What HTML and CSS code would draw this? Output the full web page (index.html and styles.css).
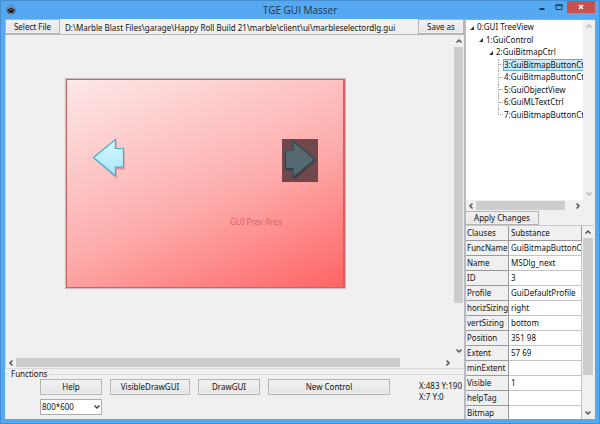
FILE: index.html
```html
<!DOCTYPE html>
<html lang="en">
<head>
<meta charset="utf-8">
<title>TGE GUI Masser</title>
<link rel="stylesheet" href="styles.css">
</head>
<body>
<svg width="0" height="0" class="defs" aria-hidden="true">
  <symbol id="chev" viewBox="0 0 8 8"><path d="M1.5 5.5 4 3l2.5 2.5" fill="none" stroke="currentColor" stroke-width="1.5"/></symbol>
  <symbol id="tri" viewBox="0 0 5 5"><path d="M5 0v5H0z" fill="#333"/></symbol>
</svg>
<div class="window">
  <header class="titlebar">
    <svg class="logo" viewBox="0 0 10 10" aria-hidden="true">
      <circle cx="5" cy="5" r="4.7" fill="#536b89"/>
      <path d="M1 4a4.2 4.2 0 0 1 8 0" fill="#8ea5be"/>
      <ellipse cx="5" cy="6.6" rx="2.1" ry="1.7" fill="#08111f"/>
      <circle cx="2.5" cy="4.8" r=".9" fill="#08111f"/><circle cx="4" cy="3.3" r=".9" fill="#08111f"/>
      <circle cx="6" cy="3.3" r=".9" fill="#08111f"/><circle cx="7.5" cy="4.8" r=".9" fill="#08111f"/>
      <circle cx="5" cy="8.5" r=".7" fill="#c5d4e2"/>
    </svg>
    <h1>TGE GUI Masser</h1>
    <div class="controls">
      <button class="ctl" aria-label="Minimize"><svg viewBox="0 0 8 8"><path d="M1.500 5h5v2h-5z" fill="#1d3c5b"/></svg></button>
      <button class="ctl" aria-label="Maximize"><svg viewBox="0 0 8 8"><path d="M1 2h6v4.500H1z" fill="none" stroke="#1d3c5b"/><path d="M.5 1.500h7v1.500h-7z" fill="#1d3c5b"/></svg></button>
      <button class="ctl close" aria-label="Close"><svg viewBox="0 0 8 8"><path d="m2 2 4 4M6 2 2 6" stroke="#fff" stroke-width="1.400"/></svg></button>
    </div>
  </header>
  <div class="client">
    <main class="left">
      <div class="toolbar">
        <button class="btn">Select File</button>
        <span class="path">D:\Marble Blast Files\garage\Happy Roll Build 21\marble\client\ui\marbleselectordlg.gui</span>
        <button class="btn save">Save as</button>
      </div>
      <div class="viewer">
        <div class="canvas">
          <div class="preview">
            <svg class="arrow prev" viewBox="0 0 36 42" aria-hidden="true">
              <defs><linearGradient id="ice" x2="0" y2="1"><stop stop-color="#d8f6ff"/><stop offset="1" stop-color="#a5e7fa"/></linearGradient></defs>
              <path d="M2.500 21 24.500 3.500v9h8v19h-8v9z" fill="#7a3f48" opacity=".35"/>
              <path d="M1.500 19.500 23.500 1.500v9h8v18.500h-8v9z" fill="url(#ice)" stroke="#4babc4" stroke-width="1.200"/>
            </svg>
            <span class="area-label">GUI Prev Area</span>
            <div class="selected">
              <svg viewBox="0 0 36 43" aria-hidden="true">
                <path d="M4 12h8V3l22 18.500L12 41v-9.500H4z" fill="#3d2c33" opacity=".6"/>
                <path d="M3.500 11h7.500V2l22 18.500L11 38.500v-9H3.500z" fill="#566870" stroke="#244d5a" stroke-width="1.200"/>
              </svg>
            </div>
          </div>
        </div>
        <div class="vbar"><svg><use href="#chev"/></svg><div class="track"><div class="thumb canvas-thumb"></div></div><svg class="down"><use href="#chev"/></svg></div>
        <div class="hbar"><svg class="west"><use href="#chev"/></svg><div class="track"><div class="thumb canvas-hthumb"></div></div><svg class="east"><use href="#chev"/></svg></div>
      </div>
      <fieldset class="functions">
        <legend>Functions</legend>
        <div class="actions">
          <button class="btn">Help</button>
          <button class="btn">VisibleDrawGUI</button>
          <button class="btn">DrawGUI</button>
          <button class="btn">New Control</button>
          <div class="combo">
            <select aria-label="Resolution"><option>800*600</option></select>
            <svg class="down"><use href="#chev"/></svg>
          </div>
        </div>
        <div class="coords">X:483 Y:190<br>X:7 Y:0</div>
      </fieldset>
    </main>
    <aside class="right">
      <div class="treebox">
        <ul class="tree">
          <li><svg><use href="#tri"/></svg><span>0:GUI TreeView</span></li>
          <li class="l1"><svg><use href="#tri"/></svg><span>1:GuiControl</span></li>
          <li class="l2"><svg><use href="#tri"/></svg><span>2:GuiBitmapCtrl</span></li>
          <li class="leaf current"><span>3:GuiBitmapButtonCtr</span></li>
          <li class="leaf"><span>4:GuiBitmapButtonCtr</span></li>
          <li class="leaf"><span>5:GuiObjectView</span></li>
          <li class="leaf"><span>6:GuiMLTextCtrl</span></li>
          <li class="leaf last"><span>7:GuiBitmapButtonCtr</span></li>
        </ul>
        <div class="vbar disabled"><svg><use href="#chev"/></svg><div class="track"></div><svg class="down"><use href="#chev"/></svg></div>
        <div class="hbar"><svg class="west"><use href="#chev"/></svg><div class="track"><div class="thumb tree-thumb"></div></div><svg class="east"><use href="#chev"/></svg></div>
      </div>
      <div class="apply"><button class="btn">Apply Changes</button></div>
      <div class="props">
        <div class="sheet">
          <table>
            <thead><tr><th>Clauses</th><th>Substance</th></tr></thead>
            <tbody>
              <tr><th>FuncName</th><td>GuiBitmapButtonCt</td></tr>
              <tr><th>Name</th><td>MSDlg_next</td></tr>
              <tr><th>ID</th><td>3</td></tr>
              <tr><th>Profile</th><td>GuiDefaultProfile</td></tr>
              <tr><th>horizSizing</th><td>right</td></tr>
              <tr><th>vertSizing</th><td>bottom</td></tr>
              <tr><th>Position</th><td>351 98</td></tr>
              <tr><th>Extent</th><td>57 69</td></tr>
              <tr><th>minExtent</th><td></td></tr>
              <tr><th>Visible</th><td>1</td></tr>
              <tr><th>helpTag</th><td></td></tr>
              <tr><th>Bitmap</th><td class="browse"></td></tr>
            </tbody>
          </table>
        </div>
        <div class="vbar"><svg><use href="#chev"/></svg><div class="track"><div class="thumb props-thumb"></div></div><svg class="down"><use href="#chev"/></svg></div>
      </div>
    </aside>
  </div>
</div>
</body>
</html>
```
FILE: styles.css
```css
*, ::before { box-sizing: border-box; }
body {
  margin: 0;
  font: 8px/12px "Noto Sans", "Open Sans", sans-serif;
  color: #111;
}
button, select { font: inherit; color: inherit; margin: 0; padding: 0; border-radius: 0; }
.defs { position: absolute; }

.window {
  display: grid;
  grid-template-rows: 18px minmax(0, 1fr);
  height: 100vh;
  padding: 0 4px 4px;
  background: #55a9f3;
  border: 1px solid #438fd2;
}
.titlebar { display: grid; grid-template-columns: 80px 1fr 80px; align-items: center; }
.logo { width: 10px; height: 10px; margin-left: 1px; }
.titlebar h1 { margin: 0; font: 400 10px/12px "Open Sans", sans-serif; text-align: center; color: #1f3448; }
.controls { display: flex; justify-content: flex-end; align-self: start; }
.ctl { display: grid; place-items: center; width: 17px; height: 12px; border: 0; background: none; }
.ctl svg { width: 8px; height: 8px; }
.ctl.close { width: 28px; background: #c75050; }

.client {
  display: grid;
  grid-template-columns: minmax(0, 1fr) 130px;
  grid-template-rows: minmax(0, 1fr);
  min-height: 0;
  background: #f0f0f0;
}
.btn {
  border: 1px solid #b4b4b4;
  background: linear-gradient(#f2f2f2, #e4e4e4);
  box-shadow: inset 0 0 0 1px #f0f0f0;
  text-align: center;
}

.left {
  display: grid;
  grid-template: 16px minmax(0, 1fr) 50px / minmax(0, 1fr);
  min-height: 0;
  border-right: 1px solid #b8bac0;
}
.toolbar { display: flex; border-bottom: 1px solid #b8b8b8; }
.toolbar .btn { flex: none; width: 55px; }
.toolbar .save { width: 46px; }
.path { flex: 1; padding: 3px 0 0 5px; white-space: nowrap; overflow: hidden; }

.viewer {
  display: grid;
  grid-template: minmax(0, 1fr) 11px / minmax(0, 1fr) 11px;
  border-left: 1px solid #d4d4d4;
  border-bottom: 1px solid #d8d8d8;
  min-height: 0;
}
.viewer .hbar { grid-column: 1 / -1; }
.canvas { position: relative; overflow: hidden; }
.preview {
  position: absolute;
  left: 60px;
  top: 44px;
  width: 279px;
  height: 209px;
  border: 1px solid #c86466;
  border-right-width: 2px;
  box-shadow: 0 0 1px 1px #cfc0c0;
  background: linear-gradient(157deg, #fde8e8, #fdadad 55%, #ff6464);
}
.arrow { position: absolute; left: 25px; top: 58px; width: 36px; height: 42px; }
.selected { position: absolute; left: 215px; top: 59px; width: 36px; height: 43px; background: #70474a; }
.selected svg { display: block; width: 100%; height: 100%; }
.area-label { position: absolute; left: 163px; top: 136px; color: #d4656a; }

.vbar { display: flex; flex-direction: column; align-items: center; background: #f0f0f0; color: #555; min-height: 0; }
.hbar { display: flex; align-items: center; background: #f0f0f0; color: #555; }
.vbar svg, .hbar svg { flex: none; width: 8px; height: 8px; margin: 2px 1px; }
.track { flex: 1; align-self: stretch; min-height: 0; padding: 0 1px; }
.hbar .track { padding: 1px 0; }
.thumb { width: 100%; height: 100%; background: #cdcdcd; }
.canvas-thumb { height: 86%; }
.canvas-hthumb { width: 90%; }
.props-thumb { height: 81%; }
.tree-thumb { width: 92%; }
.down { transform: rotate(180deg); }
.west { transform: rotate(-90deg); }
.east { transform: rotate(90deg); }
.hbar .east { margin-right: 12px; }
.disabled { color: #b8b8b8; }

.functions {
  display: flex;
  justify-content: space-between;
  margin: 0;
  padding: 0 2px 0 35px;
  border: 0;
  border-top: 1px solid #dcdcdc;
  min-width: 0;
}
.functions legend { margin-left: -31px; padding: 0 2px; line-height: 10px; }
.actions { display: grid; grid-template-columns: 62px 80px 62px 122px; grid-template-rows: 16px 16px; gap: 4px 8px; }
.combo { position: relative; }
.combo select {
  display: block;
  width: 100%;
  height: 16px;
  padding: 0 1px;
  border: 1px solid #ababab;
  background: #fff;
  appearance: none;
}
.combo svg { position: absolute; right: 1px; top: 4px; width: 8px; height: 8px; color: #444; pointer-events: none; }
.coords { padding-top: 1px; line-height: 11px; white-space: nowrap; }

.right {
  display: grid;
  grid-template: 191px 15px minmax(0, 1fr) / minmax(0, 1fr);
  min-height: 0;
  padding-right: 1px;
  border-top: 1px solid #a4a8b0;
}
.treebox {
  display: grid;
  grid-template: minmax(0, 1fr) 11px / minmax(0, 1fr) 11px;
  background: #fff;
  border-left: 1px solid #b8bac0;
}
.treebox .hbar { grid-column: 1 / -1; }
.tree {
  display: grid;
  grid-template-rows: repeat(8, 1fr);
  height: 101px;
  margin: 0;
  padding: 1px 0 0 3px;
  list-style: none;
  overflow: hidden;
  white-space: nowrap;
}
.tree li { display: flex; align-items: center; min-width: 0; }
.tree svg { width: 4px; height: 4px; margin: 1px 2px 0 1px; flex: none; }
.tree span { padding: 0 1px; }
.tree .l1 { margin-left: 9px; }
.tree .l2 { margin-left: 19px; }
.tree .leaf { align-items: stretch; margin-left: 29px; border-left: 1px dotted #aaa; }
.leaf::before { content: ""; flex: none; align-self: center; width: 4px; border-top: 1px dotted #aaa; }
.tree .last { border-left: 0; }
.tree .last::before { align-self: flex-start; width: 5px; height: 50%; border: 1px dotted #aaa; border-width: 0 0 1px 1px; }
.current span { flex: 1; background: #cbe8f6; outline: 1px solid #5bb0d8; outline-offset: -1px; }

.apply { background: #f0f0f0; border-bottom: 1px solid #c8c8c8; }
.apply .btn { display: block; width: 74px; height: 14px; }
.props { display: grid; grid-template-columns: minmax(0, 1fr) 12px; min-height: 0; }
.sheet { overflow: hidden; background: #fff; border-left: 1px solid #b8bac0; }
table { width: 100%; border-collapse: separate; border-spacing: 0; table-layout: fixed; }
th, td {
  height: 15px;
  padding: 0 0 0 2px;
  font-weight: 400;
  text-align: left;
  white-space: nowrap;
  overflow: hidden;
  border-right: 1px solid #c4c4c4;
  border-bottom: 1px solid #c4c4c4;
}
th { background: #f0f0f0; border-color: #9a9a9a; }
th:first-child { width: 43px; padding-left: 1px; }
.browse { border-right: 1px solid #ff9b9b; }
```
